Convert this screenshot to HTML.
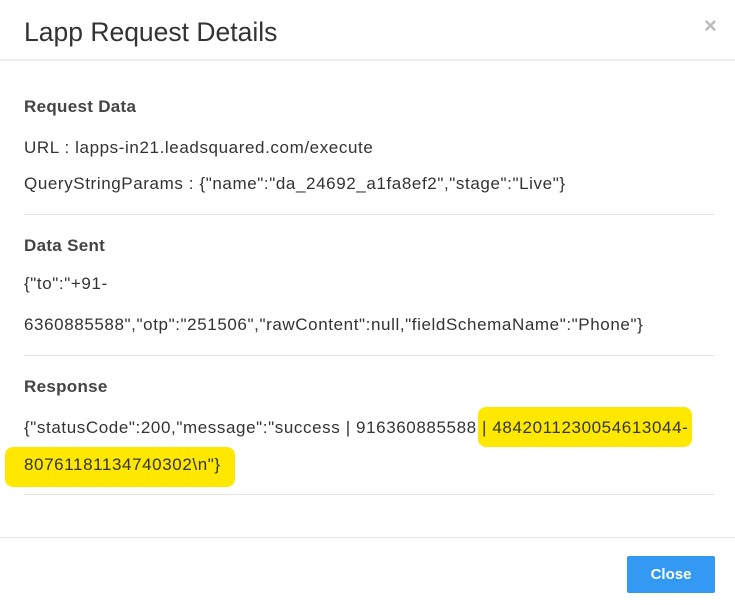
<!DOCTYPE html>
<html><head><style>
body{margin:0;width:735px;height:605px;background:#fff;font-family:"Liberation Sans",sans-serif;color:#333;position:relative;overflow:hidden}
.t{position:absolute;white-space:nowrap;font-size:17px;line-height:20px;letter-spacing:0.6px}
.b{font-weight:bold;color:#444;letter-spacing:0.3px}
.hr{position:absolute;left:24px;width:690px;height:1px;background:#e3e3e3}
</style></head><body>
<div class="t" style="left:24px;top:16px;font-size:26.5px;line-height:32px;color:#333;letter-spacing:0">Lapp Request Details</div>
<div class="t" style="left:704px;top:16px;font-size:22px;color:#bbb;font-weight:bold;letter-spacing:0">×</div>
<div style="position:absolute;left:0;top:59px;width:735px;height:2px;background:#eee"></div>
<div class="t b" style="left:24px;top:97px">Request Data</div>
<div class="t" style="left:24px;top:138px">URL : lapps-in21.leadsquared.com/execute</div>
<div class="t" style="left:24px;top:174px">QueryStringParams : {"name":"da_24692_a1fa8ef2","stage":"Live"}</div>
<div class="hr" style="top:214px"></div>
<div class="t b" style="left:24px;top:236px">Data Sent</div>
<div class="t" style="left:24px;top:274px">{"to":"+91-</div>
<div class="t" style="left:24px;top:315px">6360885588","otp":"251506","rawContent":null,"fieldSchemaName":"Phone"}</div>
<div class="hr" style="top:355px"></div>
<div class="t b" style="left:24px;top:377px">Response</div>
<div style="position:absolute;left:478px;top:407px;width:214px;height:40px;background:#ffe800;border-radius:8px"></div>
<div style="position:absolute;left:5px;top:447px;width:230px;height:40px;background:#ffe800;border-radius:8px"></div>
<div class="t" style="left:24px;top:418px">{"statusCode":200,"message":"success | 916360885588 | 48420112300546130<span>44-</span></div>
<div class="t" style="left:24px;top:455px">80761181134740302\n"}</div>
<div class="hr" style="top:494px"></div>
<div style="position:absolute;left:0;top:537px;width:735px;height:1px;background:#e5e5e5"></div>
<div style="position:absolute;left:627px;top:556px;width:88px;height:37px;background:#3399f3;border-radius:2px;color:#fff;font-weight:bold;font-size:15px;line-height:37px;text-align:center">Close</div>
</body></html>
